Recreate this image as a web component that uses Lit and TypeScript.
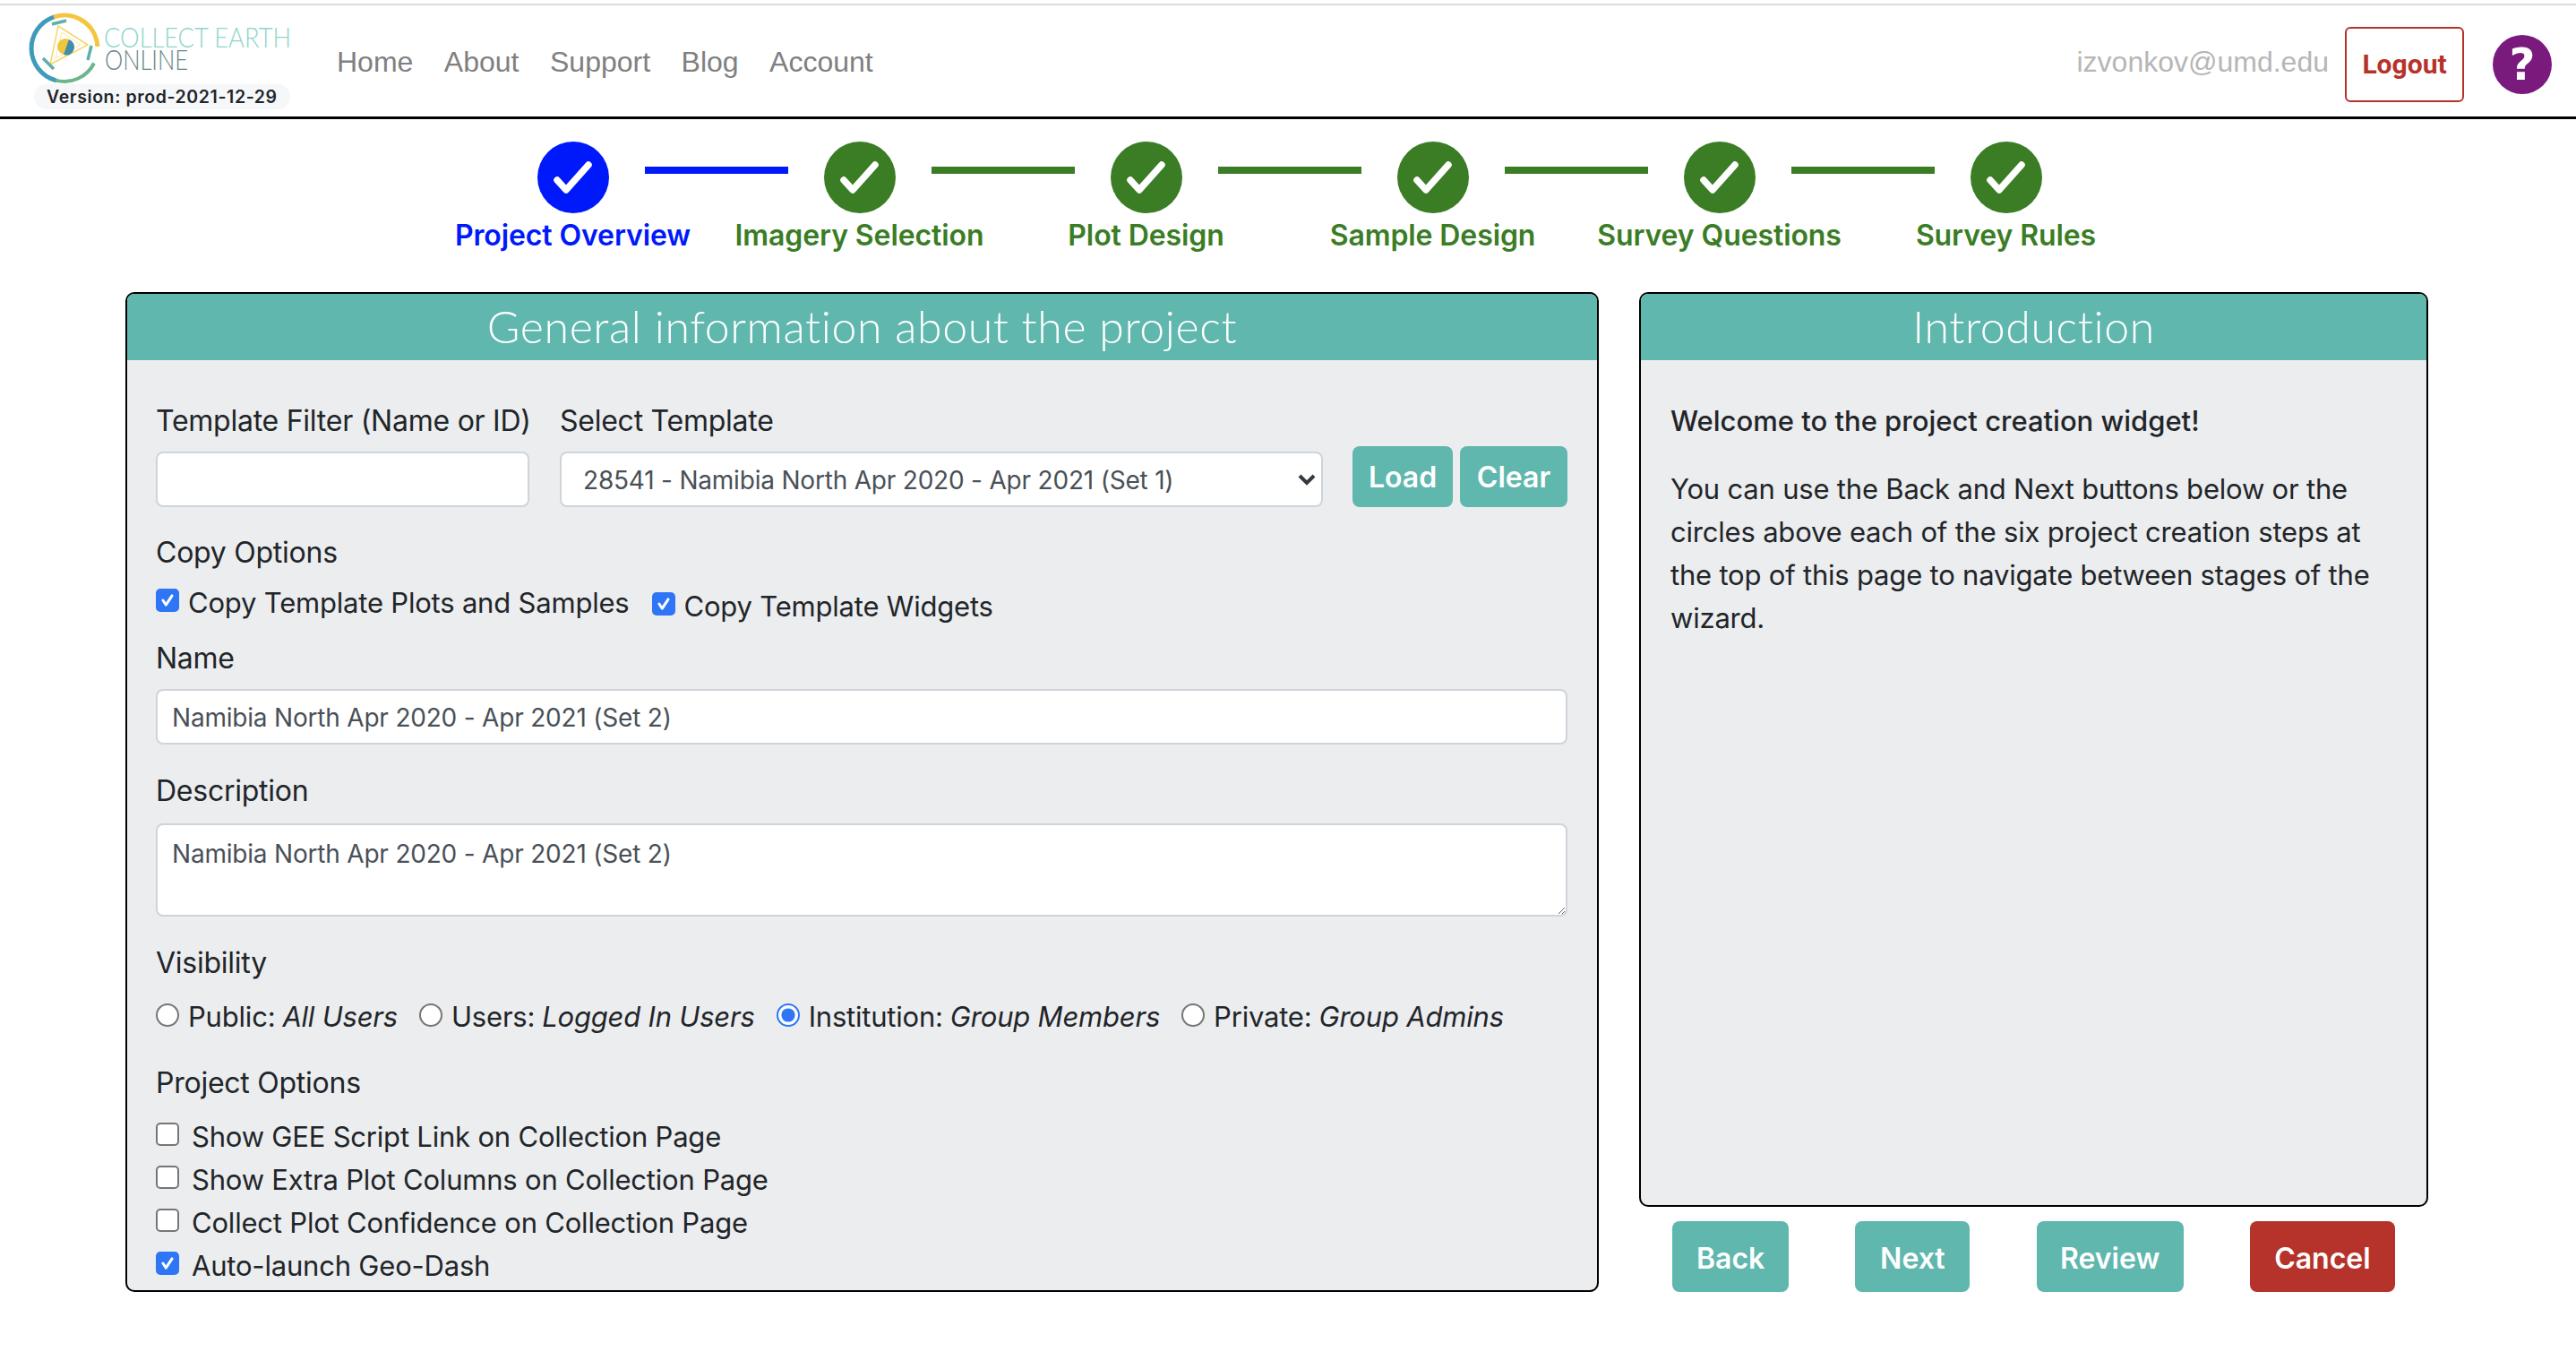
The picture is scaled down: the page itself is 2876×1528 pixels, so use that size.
import { LitElement, html, css } from 'lit';
import { customElement } from 'lit/decorators.js';

const steps = ['Project Overview', 'Imagery Selection', 'Plot Design', 'Sample Design', 'Survey Questions', 'Survey Rules'];
const navLinks = ['Home', 'About', 'Support', 'Blog', 'Account'];

const logo = html`
  <svg class="logo" width="300" height="84" viewBox="0 0 300 84">
    <g fill="none" transform="translate(-33 -14)">
      <path d="M60 19 A37 37 0 0 0 62 89.6" stroke="#3f9bb8" stroke-width="5" stroke-linecap="round" />
      <path d="M62 89.6 A37 37 0 0 0 105 70.5" stroke="#6cb68c" stroke-width="4" />
      <path d="M60 19 A37 37 0 0 1 108.9 52" stroke="#f4c63f" stroke-width="5" />
      <path d="M65 29 L98 50 L56 72 Z" stroke="#f6d667" stroke-width="1.5" />
      <path d="M69 36 L90 50 L62 65 Z" stroke="#f9e6a0" stroke-width="1" />
      <path d="M58 27 L74 23 M98 67 L102 51 M48 65 L60 77" stroke="#5fb0a8" stroke-width="3.5" />
      <circle cx="73" cy="52" r="9" fill="#f0c63f" />
      <path d="M77 44 A9 9 0 0 1 71 61 Z" fill="#3f8fa8" />
    </g>
    <text class="logo-top" x="83" y="39" textLength="209" lengthAdjust="spacingAndGlyphs">COLLECT EARTH</text>
    <text class="logo-bottom" x="84" y="64" textLength="93" lengthAdjust="spacingAndGlyphs">ONLINE</text>
  </svg>
`;

const check = html`
  <svg width="80" height="80" viewBox="0 0 80 80">
    <path d="M22 43 L32 54 L57 26" fill="none" stroke="#fff" stroke-width="7.5" stroke-linecap="round" stroke-linejoin="round" />
  </svg>
`;

@customElement('app-root')
export class AppRoot extends LitElement {
  static styles = css`
    :host {
      display: block;
      width: 2876px;
      height: 1528px;
      overflow: hidden;
      background: #fff;
      color: #212529;
      font-family: Inter, "Liberation Sans", sans-serif;
      font-size: 31px;
      letter-spacing: -0.2px;
      line-height: 48px;
      --teal: #5fb7ae;
      --red: #b5332a;
      --panel: #ecedef;
    }
    * { box-sizing: border-box; }

    .top-rule { height: 2px; margin-top: 4px; background: #dcdcdc; }
    .navbar {
      display: flex;
      align-items: center;
      height: 127px;
      padding: 8px 0 0 33px;
      border-bottom: 3px solid #000;
    }
    .brand { display: flex; flex-direction: column; width: 300px; margin-top: -8px; }
    .logo { display: block; overflow: visible; }
    .logo-top { font: 300 31px Lato, sans-serif; letter-spacing: 0; fill: #8ed5cb; }
    .logo-bottom { font: 300 31px Lato, sans-serif; letter-spacing: 0; fill: #65858a; }
    .version {
      align-self: flex-start;
      margin: -4px 0 0 5px;
      padding: 0 14px;
      height: 28px;
      border-radius: 14px;
      background: #f6f7f9;
      font-size: 19.5px;
      line-height: 28px;
      font-weight: 600;
      letter-spacing: 0.6px;
      white-space: nowrap;
    }
    .links { display: flex; gap: 34.5px; margin: -6px 0 0 43px; }
    .links a, .email {
      font-family: "Liberation Sans", Arial, sans-serif;
      font-size: 32px;
      letter-spacing: 0;
      color: #808080;
    }
    .email { margin: -6px 0 0 auto; color: #b6b6b6; }
    .logout {
      width: 133px;
      height: 84px;
      margin-left: 18px;
      padding: 0 0 2px;
      border: 2px solid var(--red);
      border-radius: 6px;
      background: #fff;
      color: var(--red);
      font: 700 30px Roboto, sans-serif;
    }
    .help {
      display: flex;
      align-items: center;
      justify-content: center;
      width: 66px;
      height: 66px;
      margin: 0 27px 0 32px;
      border-radius: 50%;
      background: #7b1a7d;
      color: #fff;
      font: 700 50px "DejaVu Sans", sans-serif;
      letter-spacing: 0;
    }

    .circles { display: flex; justify-content: center; margin: 25px 0 0 3px; }
    .circle { width: 80px; height: 80px; border-radius: 50%; background: var(--c); }
    .circle svg { display: block; }
    .bar { width: 160px; height: 8px; margin: 28px 40px 0; background: var(--c); }
    .labels {
      display: grid;
      grid-template-columns: repeat(6, 320px);
      justify-content: center;
      margin: 1px 0 0 3px;
    }
    .labels span { text-align: center; font-size: 32px; letter-spacing: -0.1px; font-weight: 600; color: var(--c); white-space: nowrap; }
    .step { --c: #3a7d25; }
    .step.active { --c: #0019fb; }

    .page {
      display: grid;
      grid-template-columns: 1645px 881px;
      gap: 45px;
      height: 1116px;
      margin: 39px 0 0 140px;
    }
    .panel {
      border: 2px solid #000;
      border-radius: 10px;
      background: var(--panel);
      overflow: hidden;
    }
    .panel-title {
      height: 74px;
      background: var(--teal);
      color: #fff;
      text-align: center;
      font: 300 50px/72px Lato, sans-serif;
      letter-spacing: 0.6px;
    }
    .form { padding: 44px 33px 0 32px; }
    .row { display: flex; }
    .col { display: flex; flex-direction: column; }
    .label, .copy-title, .name-title, .desc-title, .vis-title, .opt-title {
      font-size: 32px;
      letter-spacing: -0.25px;
      white-space: nowrap;
    }
    .label { margin-bottom: 10px; }
    .field {
      display: block;
      width: 100%;
      height: 62px;
      padding: 2px 16px 0;
      border: 2px solid #ced4da;
      border-radius: 8px;
      background-color: #fff;
      color: #495057;
      font: 400 28px Inter, sans-serif;
      letter-spacing: -0.2px;
    }
    .filter { width: 417px; }
    .template { width: 852px; margin-left: 34px; }
    select.field {
      appearance: none;
      padding-left: 24px;
      background-image: url("data:image/svg+xml,%3Csvg xmlns='http://www.w3.org/2000/svg' width='20' height='14' viewBox='0 0 20 14'%3E%3Cpath d='M2 3l8 8 8-8' fill='none' stroke='%23343a40' stroke-width='4'/%3E%3C/svg%3E");
      background-repeat: no-repeat;
      background-position: right 6px center;
    }
    .template-btns { display: flex; gap: 8px; align-self: flex-end; margin-left: 33px; }
    .btn {
      border: 0;
      border-radius: 8px;
      background: var(--teal);
      color: #fff;
      font: 600 32px Inter, sans-serif;
      padding: 0;
    }
    .btn.load { width: 112px; height: 68px; }
    .btn.clear { width: 120px; height: 68px; }
    .copy-title { margin-top: 27px; margin-bottom: 8px; }
    .copy { display: flex; }
    .copy label { display: flex; align-items: center; }
    .copy label + label { margin: 4px 0 -4px 25px; }
    .copy input, .radio input { margin-right: 10px; }
    .name-title { margin-top: 14px; margin-bottom: 10px; }
    .desc-title { margin-top: 28px; margin-bottom: 12px; }
    textarea.field {
      height: 104px;
      padding: 12px 16px;
      line-height: 40px;
      resize: vertical;
    }
    .vis-title { margin-top: 28px; margin-bottom: 12px; }
    .radio { display: flex; }
    .radio label { display: flex; align-items: center; margin-right: 24px; white-space: nowrap; }
    .radio em { margin-left: 8px; }
    .opt-title { margin-top: 26px; margin-bottom: 12px; }
    .opts label { display: flex; align-items: center; height: 48px; }
    .opts input { margin-right: 14px; }

    input[type='checkbox'], input[type='radio'] {
      appearance: none;
      flex: none;
      width: 26px;
      height: 26px;
      margin-top: -4px;
      margin-left: 0;
      border: 2px solid #767676;
      background: #fff center / 100% no-repeat;
    }
    input[type='checkbox'] { border-radius: 5px; }
    input[type='radio'] { border-radius: 50%; }
    input[type='checkbox']:checked {
      border-color: #2f76f6;
      background-color: #2f76f6;
      background-image: url("data:image/svg+xml,%3Csvg xmlns='http://www.w3.org/2000/svg' viewBox='0 0 26 26'%3E%3Cpath d='M7 13l4 6 8-12' fill='none' stroke='%23fff' stroke-width='3.5' stroke-linecap='round' stroke-linejoin='round'/%3E%3C/svg%3E");
    }
    input[type='radio']:checked {
      border-color: #2f76f6;
      background-image: url("data:image/svg+xml,%3Csvg xmlns='http://www.w3.org/2000/svg' viewBox='0 0 26 26'%3E%3Ccircle cx='13' cy='13' r='9' fill='%232f76f6'/%3E%3C/svg%3E");
    }

    .side { display: flex; flex-direction: column; }
    .side .panel { flex: 1; }
    .intro { padding: 44px 33px 0; }
    .intro .welcome { margin: 0 0 28px; font-weight: 500; letter-spacing: 0; }
    .intro p { margin: 0; }
    .actions { display: flex; justify-content: space-around; margin-top: 16px; }
    .actions .btn { height: 79px; padding-top: 3px; }
    .btn.cancel { background: var(--red); }
  `;

  render() {
    return html`
      <div class="top-rule"></div>
      <nav class="navbar">
        <div class="brand">
          ${logo}
          <span class="version">Version: prod-2021-12-29</span>
        </div>
        <div class="links">${navLinks.map((l) => html`<a>${l}</a>`)}</div>
        <span class="email">izvonkov@umd.edu</span>
        <button class="logout">Logout</button>
        <span class="help">?</span>
      </nav>

      <div class="circles">
        ${steps.map(
          (_, i) => html`
            <div class="circle step ${i === 0 ? 'active' : ''}">${check}</div>
            ${i < steps.length - 1 ? html`<div class="bar step ${i === 0 ? 'active' : ''}"></div>` : ''}
          `
        )}
      </div>
      <div class="labels">
        ${steps.map((s, i) => html`<span class="step ${i === 0 ? 'active' : ''}">${s}</span>`)}
      </div>

      <main class="page">
        <section class="panel">
          <div class="panel-title">General information about the project</div>
          <div class="form">
            <div class="row">
              <div class="col filter">
                <span class="label">Template Filter (Name or ID)</span>
                <input class="field" type="text" />
              </div>
              <div class="col template">
                <span class="label">Select Template</span>
                <select class="field">
                  <option>28541 - Namibia North Apr 2020 - Apr 2021 (Set 1)</option>
                </select>
              </div>
              <div class="template-btns">
                <button class="btn load">Load</button>
                <button class="btn clear">Clear</button>
              </div>
            </div>

            <div class="copy-title">Copy Options</div>
            <div class="copy">
              <label><input type="checkbox" checked />Copy Template Plots and Samples</label>
              <label><input type="checkbox" checked />Copy Template Widgets</label>
            </div>

            <div class="name-title">Name</div>
            <input class="field" type="text" value="Namibia North Apr 2020 - Apr 2021 (Set 2)" />

            <div class="desc-title">Description</div>
            <textarea class="field">Namibia North Apr 2020 - Apr 2021 (Set 2)</textarea>

            <div class="vis-title">Visibility</div>
            <div class="radio">
              <label><input type="radio" name="vis" />Public: <em>All Users</em></label>
              <label><input type="radio" name="vis" />Users: <em>Logged In Users</em></label>
              <label><input type="radio" name="vis" checked />Institution: <em>Group Members</em></label>
              <label><input type="radio" name="vis" />Private: <em>Group Admins</em></label>
            </div>

            <div class="opt-title">Project Options</div>
            <div class="opts">
              <label><input type="checkbox" />Show GEE Script Link on Collection Page</label>
              <label><input type="checkbox" />Show Extra Plot Columns on Collection Page</label>
              <label><input type="checkbox" />Collect Plot Confidence on Collection Page</label>
              <label><input type="checkbox" checked />Auto-launch Geo-Dash</label>
            </div>
          </div>
        </section>

        <div class="side">
          <section class="panel">
            <div class="panel-title">Introduction</div>
            <div class="intro">
              <p class="welcome">Welcome to the project creation widget!</p>
              <p>
                You can use the Back and Next buttons below or the circles above each of the six project creation steps at
                the top of this page to navigate between stages of the wizard.
              </p>
            </div>
          </section>
          <div class="actions">
            <button class="btn" style="width:130px">Back</button>
            <button class="btn" style="width:128px">Next</button>
            <button class="btn" style="width:164px">Review</button>
            <button class="btn cancel" style="width:162px">Cancel</button>
          </div>
        </div>
      </main>
    `;
  }
}
